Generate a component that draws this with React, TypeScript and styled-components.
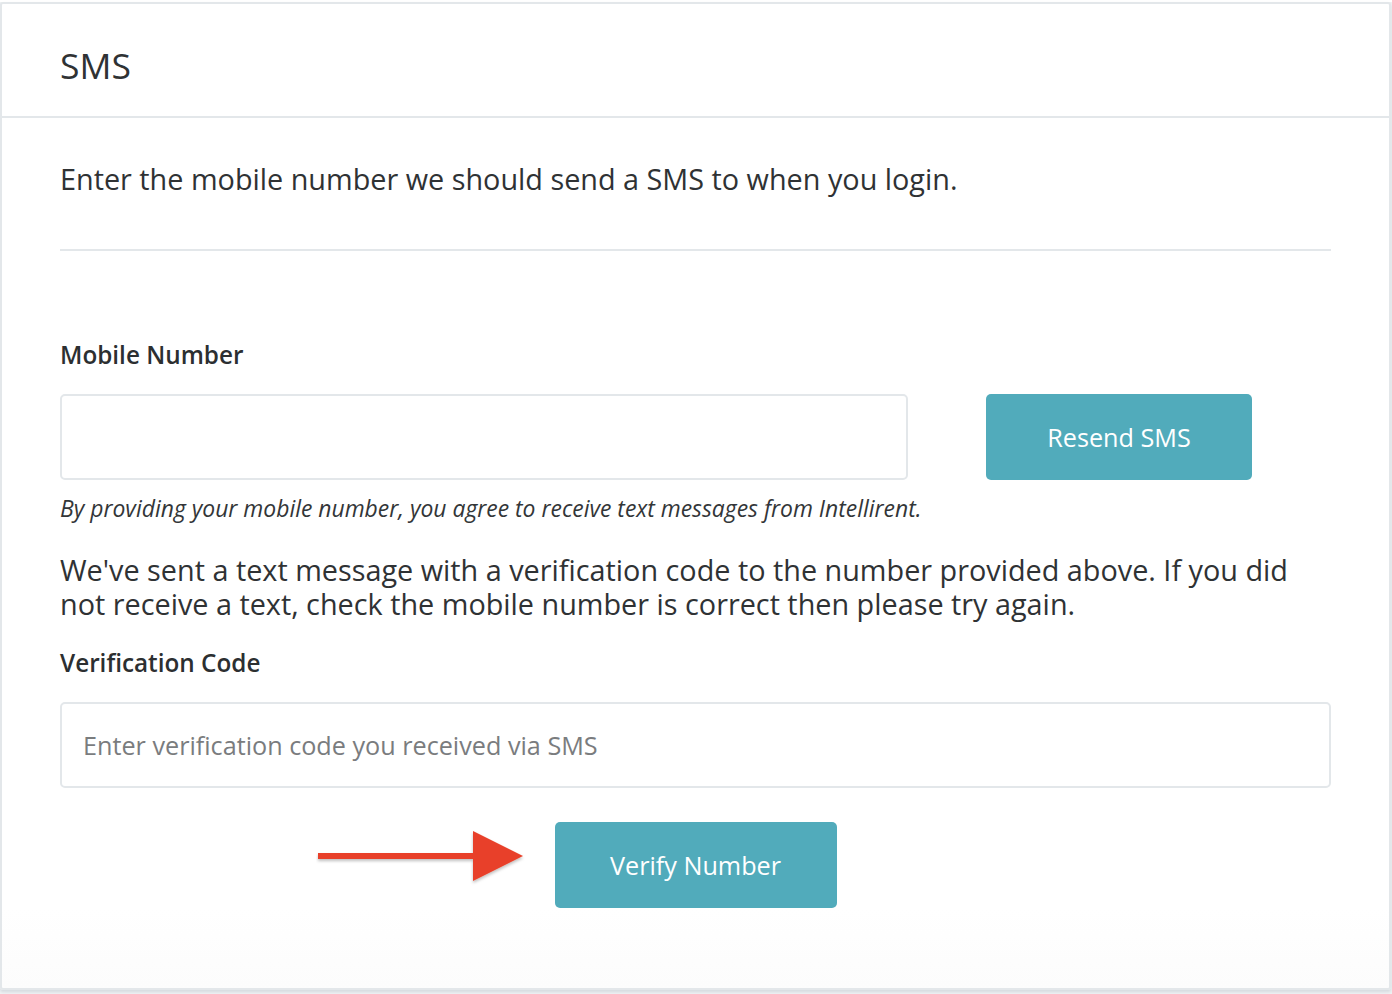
import React from "react";
import styled, { createGlobalStyle } from "styled-components";

const GlobalStyle = createGlobalStyle`
  html, body {
    margin: 0;
    padding: 0;
    background: #eef1f3;
  }
  body {
    font-family: "Open Sans", "Liberation Sans", sans-serif;
    color: #2f3234;
  }
`;

const App = () => {
  return (
    <Page>
      <GlobalStyle />
      <TopEdge />
      <Card>
        <Head>
          <h2>SMS</h2>
        </Head>
        <Body>
          <Intro>Enter the mobile number we should send a SMS to when you login.</Intro>
          <Divider />
          <Label>Mobile Number</Label>
          <Row>
            <Input type="text" defaultValue="" />
            <Button $side>Resend SMS</Button>
          </Row>
          <Note>
            By providing your mobile number, you agree to receive text messages from Intellirent.
          </Note>
          <Para>
            We've sent a text message with a verification code to the number provided above. If you did
            not receive a text, check the mobile number is correct then please try again.
          </Para>
          <Label $top={25}>Verification Code</Label>
          <Input type="text" placeholder="Enter verification code you received via SMS" $full />
          <Actions>
            <ButtonHold>
              <Arrow width="212" height="56" viewBox="0 0 212 56">
                <defs>
                  <filter id="sh" x="-10%" y="-20%" width="120%" height="160%">
                    <feDropShadow dx="0" dy="2" stdDeviation="1.5" floodColor="#000" floodOpacity="0.25" />
                  </filter>
                </defs>
                <g filter="url(#sh)">
                  <rect x="2" y="23" width="160" height="6" fill="#e8412a" />
                  <polygon points="157,1 207,26 157,51" fill="#e8412a" />
                </g>
              </Arrow>
              <Button>Verify Number</Button>
            </ButtonHold>
          </Actions>
        </Body>
      </Card>
    </Page>
  );
};

export default App;

const Page = styled.div`
  width: 1392px;
  height: 994px;
  overflow: hidden;
  background: #eef1f3;
`;
const TopEdge = styled.div`
  height: 2px;
  background: #ffffff;
`;
const Card = styled.div`
  width: 1387px;
  margin-left: 0px;
  height: 984px;
  background: linear-gradient(180deg, #ffffff 92%, #fcfcfc 100%);
  border: 2px solid #e3e7ea;
  border-radius: 3px;
  box-shadow: 0 2px 3px rgba(40, 60, 80, 0.12);
`;
const Head = styled.div`
  box-sizing: border-box;
  height: 114px;
  padding: 10px 58px 0;
  border-bottom: 2px solid #e3e7ea;
  display: flex;
  align-items: center;
  h2 {
    margin: 0;
    font-weight: 400;
    font-size: 35.5px;
    color: #2f3234;
  }
`;
const Body = styled.div`
  padding: 0 58px 0 58px;
`;
const Intro = styled.p`
  margin: 0;
  padding-top: 42px;
  font-size: 28.8px;
  line-height: 38px;
`;
const Divider = styled.div`
  margin-top: 51px;
  height: 2px;
  background: #e3e7ea;
`;
const Label = styled.div<{ $top?: number }>`
  margin-top: ${(p) => (p.$top !== undefined ? p.$top : 87)}px;
  font-size: 24.3px;
  font-weight: 600;
  line-height: 34px;
  color: #2c2f31;
`;
const Row = styled.div`
  margin-top: 22px;
  display: flex;
  align-items: stretch;
`;
const Input = styled.input<{ $full?: boolean }>`
  box-sizing: border-box;
  width: ${(p) => (p.$full ? "100%" : "848px")};
  height: 86px;
  margin: ${(p) => (p.$full ? "22px 0 0" : "0")};
  padding: 0 21px;
  border: 2px solid #e3e7ea;
  border-radius: 5px;
  background: #ffffff;
  font-family: "Open Sans", "Liberation Sans", sans-serif;
  font-size: 25.2px;
  color: #333;
  outline: none;
  &::placeholder {
    color: #7a7c7e;
  }
`;
const Button = styled.button<{ $side?: boolean }>`
  box-sizing: border-box;
  width: ${(p) => (p.$side ? "266px" : "282px")};
  height: 86px;
  margin-left: ${(p) => (p.$side ? "78px" : "0")};
  border: none;
  border-radius: 5px;
  background: #51abbb;
  color: #ffffff;
  font-family: "Open Sans", "Liberation Sans", sans-serif;
  font-size: 25.2px;
  cursor: pointer;
`;
const Note = styled.div`
  margin-top: 12px;
  font-size: 22.9px;
  font-style: italic;
  line-height: 34px;
  color: #333638;
`;
const Para = styled.p`
  margin: 27px 0 0;
  font-size: 28.8px;
  line-height: 34px;
  color: #2f3234;
`;
const Actions = styled.div`
  margin-top: 34px;
  display: flex;
  justify-content: center;
`;
const ButtonHold = styled.div`
  position: relative;
  display: flex;
`;
const Arrow = styled.svg`
  position: absolute;
  right: calc(100% + 27px);
  top: 8px;
`;
